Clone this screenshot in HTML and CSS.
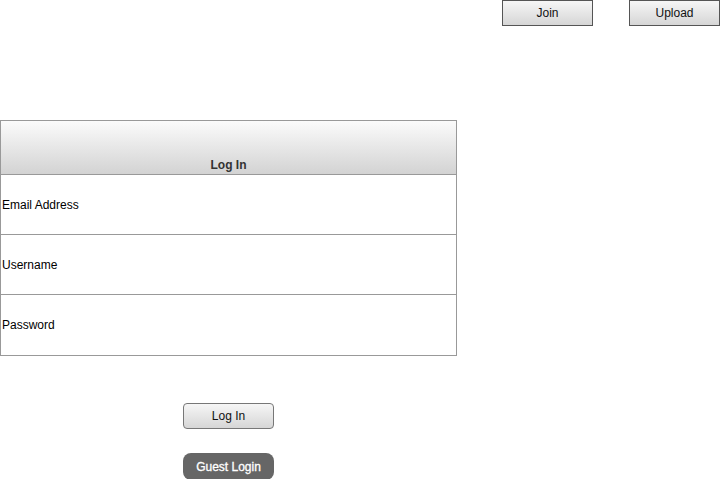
FILE: index.html
```html
<!DOCTYPE html>
<html>
<head>
<meta charset="utf-8">
<link rel="stylesheet" href="styles.css">
</head>
<body>
<div class="topbar">
  <button class="btn top-btn">Join</button>
  <button class="btn top-btn">Upload</button>
</div>
<div class="panel">
  <div class="panel-head">Log In</div>
  <div class="row">Email Address</div>
  <div class="row">Username</div>
  <div class="row last">Password</div>
</div>
<div class="actions">
  <button class="btn login-btn">Log In</button>
  <button class="guest-btn">Guest Login</button>
</div>
</body>
</html>
```
FILE: styles.css
```css
html, body {
  margin: 0;
  padding: 0;
  background: #fff;
  font-family: "Liberation Sans", Arial, sans-serif;
  font-size: 12px;
  color: #000;
  overflow: hidden;
}
.topbar {
  display: flex;
  justify-content: flex-end;
  gap: 36px;
  height: 26px;
}
.btn {
  font-family: "Liberation Sans", Arial, sans-serif;
  font-size: 12px;
  color: #111;
  background: linear-gradient(#f6f6f6, #d6d6d6);
  padding: 0;
  margin: 0;
}
.top-btn {
  width: 91px;
  height: 26px;
  border: 1px solid #555;
}
.panel {
  margin-top: 94px;
  width: 457px;
  box-sizing: border-box;
  border: 1px solid #999;
}
.panel-head {
  height: 54px;
  box-sizing: border-box;
  border-bottom: 1px solid #999;
  background: linear-gradient(#fbfbfb, #d3d3d3);
  display: flex;
  align-items: flex-end;
  justify-content: center;
  padding-bottom: 2px;
  font-weight: bold;
  color: #333;
}
.row {
  height: 60px;
  box-sizing: border-box;
  border-bottom: 1px solid #999;
  display: flex;
  align-items: center;
  padding-left: 1px;
}
.row.last {
  border-bottom: none;
  height: 60px;
}
.actions {
  margin-top: 47px;
  margin-left: 183px;
  display: flex;
  flex-direction: column;
  gap: 24px;
  width: 91px;
}
.login-btn {
  width: 91px;
  height: 26px;
  border: 1px solid #777;
  border-radius: 4px;
}
.guest-btn {
  width: 91px;
  height: 27px;
  border: none;
  border-radius: 8px;
  background: #666;
  color: #fff;
  font-family: "Liberation Sans", Arial, sans-serif;
  font-size: 12px;
  padding: 0;
  -webkit-text-stroke: 0.3px #fff;
}
```
